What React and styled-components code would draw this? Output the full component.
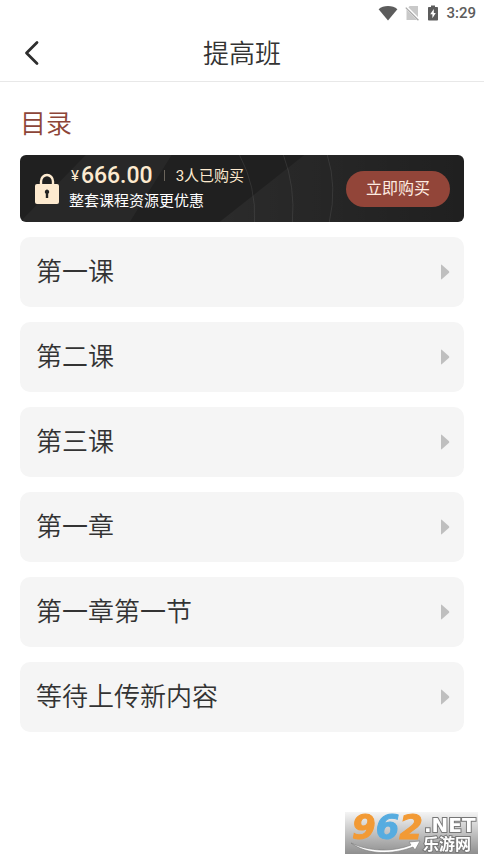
import React from 'react';
import styled, { createGlobalStyle } from 'styled-components';

const lessons = [
  '第一课',
  '第二课',
  '第三课',
  '第一章',
  '第一章第一节',
  '等待上传新内容',
];

function StatusBar() {
  return (
    <StatusBarWrapper>
      <svg width='20' height='16' viewBox='0 0 20 16' aria-hidden='true'>
        <path d='M0.6 4.2C3 2.2 6.3 1 10 1s7 1.2 9.4 3.2L10 15.6z' fill='#5c5c5c' />
      </svg>
      <svg width='15' height='16' viewBox='0 0 15 16' aria-hidden='true'>
        <path d='M4.6 1H13v14H1.5V4.5z' fill='#c9c9c9' />
        <path d='M0.5 1.5l13.5 13.5' stroke='#fff' strokeWidth='3' />
        <path d='M0.8 2.6l12.6 12.6' stroke='#a8a8a8' strokeWidth='1.3' />
      </svg>
      <svg width='12' height='16' viewBox='0 0 12 16' aria-hidden='true'>
        <path d='M4 0.5h4V2h2.2c.5 0 .8.3.8.8v12c0 .4-.3.7-.8.7H1.8c-.5 0-.8-.3-.8-.7v-12c0-.5.3-.8.8-.8H4z' fill='#5c5c5c' />
        <path d='M6.8 4L3.2 9.2h2.2v4L8.8 8H6.8z' fill='#fff' />
      </svg>
      <Clock>3:29</Clock>
    </StatusBarWrapper>
  )
}

function BuyBanner() {
  return (
    <Banner>
      <BannerPattern viewBox='0 0 445 67' preserveAspectRatio='none' aria-hidden='true'>
        <path d='M66 0H152L110 67H0z' fill='#fff' opacity='0.04' />
        <path d='M285 0H445V67H200z' fill='url(#bannerShine)' />
        <defs>
          <linearGradient id='bannerShine' x1='0' y1='0' x2='1' y2='0'>
            <stop offset='0' stopColor='#fff' stopOpacity='0.05' />
            <stop offset='1' stopColor='#fff' stopOpacity='0' />
          </linearGradient>
        </defs>
        <g fill='none' stroke='#fff' strokeOpacity='0.09'>
          <path d='M220 0Q237 32 235 67' />
          <path d='M264 0Q276 32 273 67' />
          <path d='M308 0Q318 32 310 67' />
        </g>
      </BannerPattern>
      <Lock width='26' height='34' viewBox='0 0 26 34' aria-hidden='true'>
        <path d='M7 14V9.5a6 6.5 0 0 1 12 0V14' fill='none' stroke='#fdeacf' strokeWidth='2.4' />
        <rect x='1' y='12' width='24' height='20' rx='2' fill='#fdeacf' />
        <path d='M13 17.5a2.3 2.3 0 0 1 1.2 4.2V26h-2.4v-4.3A2.3 2.3 0 0 1 13 17.5z' fill='#222' />
      </Lock>
      <BannerInfo>
        <PriceLine>
          <Currency>¥</Currency>
          <Price>666.00</Price>
          <Divider />
          <Buyers>3人已购买</Buyers>
        </PriceLine>
        <BannerNote>整套课程资源更优惠</BannerNote>
      </BannerInfo>
      <BuyBtn type='button'>立即购买</BuyBtn>
    </Banner>
  )
}

function SiteMark() {
  return (
    <MarkWrapper viewBox='0 0 133 42' role='img' aria-label='962.NET 乐游网'>
      <defs>
        <linearGradient id='markBack' x1='0' y1='0' x2='0' y2='1'>
          <stop offset='0' stopColor='#f5f5f5' />
          <stop offset='1' stopColor='#8f8f8f' />
        </linearGradient>
      </defs>
      <rect width='133' height='42' fill='url(#markBack)' />
      <path d='M6 31C25 40 48 40 66 33l-2-3 11-1-5 9-2-3C47 43 22 43 6 31z' fill='#fff' stroke='#777' strokeWidth='0.6' />
      <MarkDigits x='7' y='27'>
        <tspan fill='#f29a35' stroke='#f29a35'>9</tspan>
        <tspan fill='#56ace0' stroke='#56ace0'>6</tspan>
        <tspan fill='#f29a35' stroke='#f29a35'>2</tspan>
      </MarkDigits>
      <MarkDomain x='79' y='20'>.NET</MarkDomain>
      <MarkName x='78' y='38'>乐游网</MarkName>
    </MarkWrapper>
  )
}

function App() {
  return (
    <Page>
      <GlobalStyle />
      <StatusBar />
      <Header>
        <BackBtn type='button' aria-label='返回'>
          <svg width='16' height='26' viewBox='0 0 16 26' fill='none' aria-hidden='true'>
            <path d='M13 2.5L2.5 13L13 23.5' stroke='#2e2e2e' strokeWidth='2.8' strokeLinecap='round' strokeLinejoin='round' />
          </svg>
        </BackBtn>
        <Title>提高班</Title>
      </Header>
      <Content>
        <Heading>目录</Heading>
        <BuyBanner />
        <LessonList>
          {lessons.map(lesson => (
            <li key={lesson}>
              <LessonBtn type='button'>
                <LessonName>{lesson}</LessonName>
                <svg width='10' height='16' viewBox='0 0 10 16' aria-hidden='true'>
                  <path d='M1 1.2Q1 .2 2 .9L9 7.3Q9.7 8 9 8.7L2 15.1Q1 15.8 1 14.8z' fill='#bfbfbf' />
                </svg>
              </LessonBtn>
            </li>
          ))}
        </LessonList>
      </Content>
      <SiteMark />
    </Page>
  )
}

export default App;

const GlobalStyle = createGlobalStyle`
  * {
    box-sizing: border-box;
  }

  body {
    margin: 0;
    background-color: #fff;
    color: #333;
    font-family: Roboto, 'Noto Sans CJK SC', sans-serif;
  }

  button {
    padding: 0;
    border: none;
    font-family: inherit;
    cursor: pointer;
  }
`

const Page = styled.div`
  min-height: 100vh;
`

const StatusBarWrapper = styled.div`
  display: flex;
  align-items: center;
  justify-content: flex-end;
  gap: 7px;
  height: 26px;
  padding-right: 8px;
`

const Clock = styled.span`
  font-size: 15px;
  font-weight: 500;
  line-height: 16px;
  color: #5c5c5c;
`

const Header = styled.header`
  display: grid;
  grid-template-columns: 40px 1fr 40px;
  align-items: center;
  height: 56px;
  padding: 0 20px;
  border-bottom: 1px solid #e8e8e8;
`

const BackBtn = styled.button`
  display: flex;
  align-items: center;
  height: 40px;
  padding: 0 0 2px 4px;
  background: none;
`

const Title = styled.h1`
  margin: 0;
  font-size: 26px;
  font-weight: 350;
  line-height: 40px;
  text-align: center;
`

const Content = styled.main`
  padding: 20px;
`

const Heading = styled.h2`
  margin: 0 0 11px;
  padding-top: 2px;
  font-size: 26px;
  font-weight: 350;
  line-height: 40px;
  color: #8d4538;
`

const Banner = styled.section`
  position: relative;
  display: flex;
  align-items: center;
  gap: 9px;
  min-height: 67px;
  padding: 0 14px;
  border-radius: 6px;
  overflow: hidden;
  background-color: #202020;
`

const BannerPattern = styled.svg`
  position: absolute;
  inset: 0;
  width: 100%;
  height: 100%;
`

const Lock = styled.svg`
  position: relative;
`

const BannerInfo = styled.div`
  position: relative;
  flex: 1;
  padding-bottom: 2px;
`

const PriceLine = styled.div`
  display: flex;
  align-items: center;
  height: 26px;
  padding-left: 2px;
  color: #fdeacf;
`

const Currency = styled.span`
  margin-right: 2px;
  font-size: 15px;
`

const Price = styled.strong`
  font-size: 23px;
  font-weight: 500;
`

const Divider = styled.span`
  width: 1px;
  height: 11px;
  margin: 0 11px;
  background-color: #6b655c;
`

const Buyers = styled.span`
  font-size: 15px;
  line-height: 20px;
`

const BannerNote = styled.p`
  margin: 0;
  font-size: 15px;
  line-height: 24px;
  color: #fff;
`

const BuyBtn = styled.button`
  position: relative;
  height: 36px;
  padding: 0 20px;
  border-radius: 18px;
  font-size: 16px;
  line-height: 20px;
  color: #fdebe0;
  background-color: #924539;
`

const LessonList = styled.ul`
  display: flex;
  flex-direction: column;
  gap: 15px;
  margin: 15px 0 0;
  padding: 0;
  list-style: none;
`

const LessonBtn = styled.button`
  display: flex;
  align-items: center;
  justify-content: space-between;
  width: 100%;
  height: 70px;
  padding: 0 14px 0 16px;
  border-radius: 10px;
  color: #333;
  background-color: #f5f5f5;
`

const LessonName = styled.span`
  padding-bottom: 5px;
  font-size: 26px;
  font-weight: 350;
`

const MarkWrapper = styled.svg`
  position: fixed;
  right: 6px;
  bottom: 6px;
  width: 133px;
  height: 42px;
  overflow: visible;
`

const MarkDigits = styled.text`
  font-family: 'DejaVu Sans', sans-serif;
  font-size: 34px;
  font-weight: 700;
  font-style: italic;
  stroke-width: 1px;
`

const MarkDomain = styled.text`
  font-family: 'DejaVu Sans', sans-serif;
  font-size: 20px;
  font-weight: 700;
  fill: #fff;
  stroke: #777;
  stroke-width: 2px;
  paint-order: stroke;
`

const MarkName = styled.text`
  font-family: 'Noto Sans CJK SC', sans-serif;
  font-size: 16px;
  font-weight: 700;
  fill: #fff;
  stroke: #777;
  stroke-width: 2px;
  paint-order: stroke;
`
